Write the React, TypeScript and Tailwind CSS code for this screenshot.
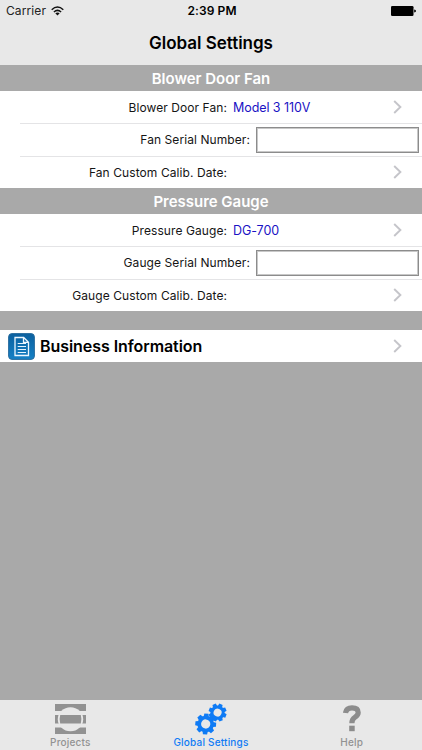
import React from "react";

function Chevron() {
  return (
    <svg className="mr-[20px] h-[14px] w-[9px] shrink-0" viewBox="0 0 9 14" fill="none" stroke="#c5c5ca" strokeWidth="1.9">
      <path d="M1.2 1 L7.4 7 L1.2 13" />
    </svg>
  );
}

function SectionHeader({ title }: { title: string }) {
  return (
    <h2 className="flex h-full items-center justify-center pt-px text-[15px] font-semibold tracking-[-0.02px] text-white">
      {title}
    </h2>
  );
}

function LinkRow({ label, value }: { label: string; value?: string }) {
  return (
    <div className="flex h-full items-center">
      <span className="w-[227px] shrink-0 pt-[2px] text-right">{label}</span>
      <span className="ml-[6px] flex-1 pt-[2px] text-[12.5px] tracking-[-0.07px] text-[#1a12c4]">{value}</span>
      <Chevron />
    </div>
  );
}

function InputRow({ label }: { label: string }) {
  return (
    <div className="flex h-full items-center">
      <span className="w-[250px] shrink-0 text-right">{label}</span>
      <input
        aria-label={label}
        className="ml-[6px] h-[26px] w-[163px] border border-[#8c8c8c] bg-white outline outline-1 -outline-offset-2 outline-[#c8c8c8]"
      />
    </div>
  );
}

function Group({ children }: { children: React.ReactNode[] }) {
  return (
    <div className="grid h-[97px] grid-rows-[32px_1px_32px_1px_30px] bg-white text-[12px] tracking-[0.08px] text-[#151515]">
      {children[0]}
      <hr className="ml-[20px] h-px border-0 bg-[#e4e4e6]" />
      {children[1]}
      <hr className="ml-[20px] h-px border-0 bg-[#e4e4e6]" />
      {children[2]}
    </div>
  );
}

function Gear({ cx, cy, r, turn }: { cx: number; cy: number; r: number; turn: number }) {
  return (
    <g transform={`translate(${cx} ${cy}) rotate(${turn})`}>
      <circle r={r * 0.62} fill="none" stroke="#0f7bf5" strokeWidth={r * 0.35} />
      {[0, 45, 90, 135, 180, 225, 270, 315].map((a) => (
        <path key={a} transform={`rotate(${a})`} fill="#0f7bf5" d={`M${-r * 0.25} ${-r * 0.7} L${-r * 0.2} ${-r} H${r * 0.2} L${r * 0.25} ${-r * 0.7} Z`} />
      ))}
    </g>
  );
}

export default function App() {
  return (
    <main className="flex h-[750px] w-[422px] flex-col overflow-hidden bg-[#a9a9a9] font-['Inter','Liberation_Sans',sans-serif] leading-none text-black">
      <header className="h-[65px] shrink-0 bg-[#e8e8e8]">
        <div className="grid h-[22px] grid-cols-3 items-center pl-[6px] pr-[6px] text-[12px]">
          <div className="flex items-center gap-[5px] text-[#222]">
            <span className="tracking-[0.1px]">Carrier</span>
            <svg className="h-[10px] w-[13px]" viewBox="0 0 13 10" fill="none" stroke="#111" strokeWidth="1.5">
              <path d="M0.7 3.7 Q6.5 -1.7 12.3 3.7" />
              <path d="M2.9 6 Q6.5 2.7 10.1 6" />
              <path d="M6.5 9.5 L4.3 7.3 Q6.5 5.5 8.7 7.3 Z" fill="#111" stroke="none" />
            </svg>
          </div>
          <span className="pl-[2px] text-center font-semibold tracking-[0.1px]">2:39 PM</span>
          <svg className="h-[10px] w-[25px] justify-self-end" viewBox="0 0 25 10">
            <rect width="22.5" height="10" rx="1.3" fill="#000" />
            <path d="M23.2 3.5 Q25 3.7 25 5 T23.2 6.5 Z" fill="#000" />
          </svg>
        </div>
        <h1 className="flex h-[43px] items-center justify-center text-[17px] font-semibold tracking-[-0.03px]">Global Settings</h1>
      </header>

      <section className="shrink-0">
        <div className="h-[26px]"><SectionHeader title="Blower Door Fan" /></div>
        <Group>
          <LinkRow label="Blower Door Fan:" value="Model 3 110V" />
          <InputRow label="Fan Serial Number:" />
          <LinkRow label="Fan Custom Calib. Date:" />
        </Group>
      </section>
      <section className="shrink-0">
        <div className="h-[26px]"><SectionHeader title="Pressure Gauge" /></div>
        <Group>
          <LinkRow label="Pressure Gauge:" value="DG-700" />
          <InputRow label="Gauge Serial Number:" />
          <LinkRow label="Gauge Custom Calib. Date:" />
        </Group>
      </section>

      <div className="mt-[19px] flex h-[32px] shrink-0 items-center bg-white pl-[8px]">
        <svg className="h-[27px] w-[27px] shrink-0" viewBox="0 0 27 27" fill="none">
          <defs>
            <linearGradient id="tile" x1="0" y1="0" x2="0" y2="1">
              <stop stopColor="#0b609f" />
              <stop offset="1" stopColor="#1581c6" />
            </linearGradient>
          </defs>
          <rect x="0.6" y="0.6" width="25.8" height="25.8" rx="3.4" fill="url(#tile)" stroke="#286c9e" />
          <path d="M7 4.5 H15.7 L20.5 9.2 V22.5 H7 Z M15.5 4.7 V9.4 H20.3" stroke="#edf7ff" strokeWidth="1.3" />
          <path d="M9.7 10.5 H18 M9.7 13.5 H18 M9.7 16.5 H18 M9.7 19.5 H18" stroke="#e6f4ff" strokeWidth="1.1" />
        </svg>
        <span className="ml-[5px] flex-1 text-[16px] font-semibold tracking-[-0.06px]">Business Information</span>
        <Chevron />
      </div>

      <nav className="mt-auto grid h-[50px] shrink-0 grid-cols-3 bg-[#e8e8e8] text-[10px] font-medium tracking-[0.2px] text-[#929292]">
        <div className="flex flex-col items-center pt-[4px]">
          <svg className="h-[30px] w-[31px]" viewBox="0 0 31 30">
            <path d="M0 0H31V7H0Z M0 11H31V19.5H0Z M0 23.5H31V30H0Z" fill="#929292" />
            <ellipse cx="15.5" cy="15.2" rx="12.7" ry="12" fill="#e8e8e8" />
            <path d="M5.2 11H25.8Q27 15.2 25.8 19.5H5.2Q4 15.2 5.2 11Z" fill="#929292" />
          </svg>
          <span className="mt-[3px]">Projects</span>
        </div>
        <div className="flex flex-col items-center pt-[3px] text-[#0f7bf5]">
          <svg className="h-[32px] w-[32px]" viewBox="0 0 32 32">
            <Gear cx={10.7} cy={21} r={10.4} turn={4} />
            <Gear cx={22.6} cy={9.6} r={9} turn={22} />
          </svg>
          <span className="mt-[2px]">Global Settings</span>
        </div>
        <div className="flex flex-col items-center pt-[5px]">
          <svg className="h-[27px] w-[18px]" viewBox="0 0 18 27">
            <path d="M2.5 8 Q3.2 2.8 9 2.8 Q15.2 2.8 15.2 7.6 Q15.2 10.2 11.8 12.4 Q8.9 14.2 8.9 18.2" fill="none" stroke="#8c8c8c" strokeWidth="5.2" />
            <rect x="6.2" y="20.7" width="5.5" height="5.5" fill="#8c8c8c" />
          </svg>
          <span className="mt-[5px]">Help</span>
        </div>
      </nav>
    </main>
  );
}
